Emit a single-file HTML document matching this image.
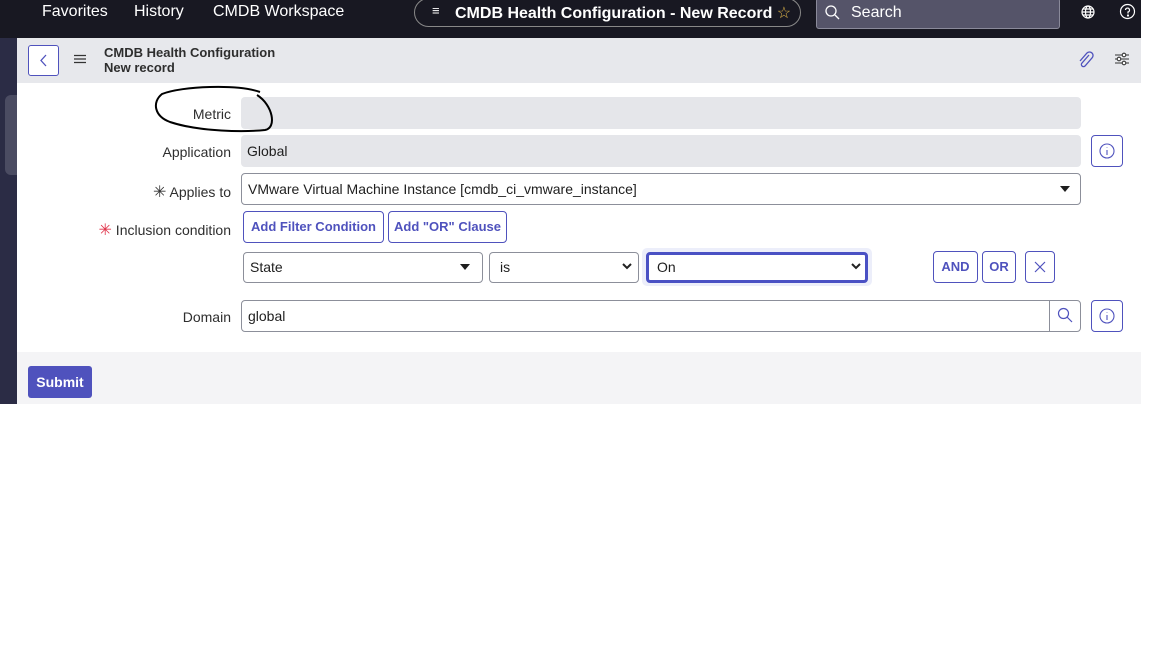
<!DOCTYPE html>
<html><head><style>
*{box-sizing:border-box;margin:0;padding:0}
body{width:1152px;height:648px;background:#fff;font-family:"Liberation Sans",sans-serif;position:relative;overflow:hidden;color:#1e1e1e}
.abs{position:absolute}
.top{left:0;top:0;width:1141px;height:38px;background:#181822}
.nav{color:#fff;font-size:16px;top:3px}
.side{left:0;top:38px;width:17px;height:366px;background:#2b2c45}
.hdr{left:17px;top:38px;width:1124px;height:45px;background:#e7e8ec}
.form{left:17px;top:83px;width:1124px;height:269px;background:#fff}
.foot{left:17px;top:352px;width:1124px;height:52px;background:#f4f4f6}
.lbl{font-size:14px;color:#2e2e2e;text-align:right;width:214px;left:17px}
.ro{background:#e5e6ea;border-radius:4px}
.inp{border:1px solid #8c8f9a;border-radius:4px;background:#fff;font-size:14px;padding-left:6px;line-height:30px}
.btn{border:1px solid #4f52bd;border-radius:4px;color:#4f52bd;font-weight:bold;font-size:13px;text-align:center;background:#fff}
.caret{width:0;height:0;border-left:5px solid transparent;border-right:5px solid transparent;border-top:6px solid #1e1e1e}
</style></head><body>
<div class="abs top"></div>
<div class="abs nav" style="left:42px">Favorites</div>
<div class="abs nav" style="left:134px">History</div>
<div class="abs nav" style="left:213px">CMDB Workspace</div>
<div class="abs" style="left:414px;top:-2px;width:387px;height:29px;border:1px solid #888;border-radius:15px"></div>
<div class="abs nav" style="left:432px;top:3px;font-size:13px">&#8801;</div>
<div class="abs nav" style="left:455px;font-weight:bold">CMDB Health Configuration - New Record <span style="color:#e2b84a;font-weight:normal">☆</span></div>
<div class="abs" style="left:816px;top:-2px;width:244px;height:31px;background:#555469;border:1px solid #8a8a9a;border-radius:3px"></div>
<svg class="abs" style="left:824px;top:4px" width="16" height="16"><circle cx="7" cy="7" r="5" fill="none" stroke="#fff" stroke-width="1.3"/><path d="M11 11l4 4" stroke="#fff" stroke-width="1.3"/></svg>
<div class="abs nav" style="left:851px;top:4px">Search</div>
<svg class="abs" style="left:1080px;top:4px" width="16" height="16" fill="none" stroke="#fff" stroke-width="1.2"><circle cx="8" cy="8" r="6"/><ellipse cx="8" cy="8" rx="2.5" ry="6"/><path d="M2 8h12M3 5h10M3 11h10"/></svg>
<svg class="abs" style="left:1119px;top:3px" width="17" height="17" fill="none" stroke="#fff" stroke-width="1.2"><circle cx="8.5" cy="8.5" r="7"/><path d="M6.5 7a2 2 0 1 1 2.5 2v1.5"/><circle cx="9" cy="12.5" r=".5" fill="#fff"/></svg>
<div class="abs side"></div>
<div class="abs" style="left:5px;top:95px;width:12px;height:80px;background:#4b4c62;border-radius:6px 0 0 6px"></div>
<div class="abs hdr"></div>
<div class="abs" style="left:28px;top:45px;width:31px;height:31px;border:1px solid #4f52bd;border-radius:3px;background:#fff"></div>
<svg class="abs" style="left:38px;top:53px" width="12" height="15"><path d="M8 2L3 7.5 8 13" fill="none" stroke="#4f52bd" stroke-width="1.3"/></svg>
<svg class="abs" style="left:74px;top:54px" width="12" height="10" stroke="#333" stroke-width="1.2"><path d="M0 1.5h12M0 5h12M0 8.5h12"/></svg>
<div class="abs" style="left:104px;top:45px;font-size:13px;font-weight:bold;color:#2e2e2e;line-height:15px">CMDB Health Configuration<br>New record</div>
<svg class="abs" style="left:1077px;top:51px" width="18" height="18" fill="none" stroke="#4f52bd" stroke-width="1.3"><path d="M12 4l-7 8a2 2 0 0 0 3 3l7-8a3.5 3.5 0 0 0-5-5l-7 8"/></svg>
<svg class="abs" style="left:1114px;top:52px" width="16" height="14" stroke="#333" stroke-width="1.1" fill="#fff"><path d="M1 3h14M1 7h14M1 11h14"/><circle cx="10" cy="3" r="1.8"/><circle cx="5" cy="7" r="1.8"/><circle cx="10" cy="11" r="1.8"/></svg>
<div class="abs form"></div>
<div class="abs foot"></div>

<div class="abs lbl" style="top:106px">Metric</div>
<div class="abs ro" style="left:241px;top:97px;width:840px;height:32px"></div>
<svg class="abs" style="left:152px;top:84px" width="125" height="50"><path d="M108 8C85 0 30 2 10 10 0 18 2 32 18 38c30 10 75 10 95 8 12-2 8-25-8-35" fill="none" stroke="#000" stroke-width="2"/></svg>

<div class="abs lbl" style="top:144px">Application</div>
<div class="abs ro" style="left:241px;top:135px;width:840px;height:32px;font-size:14px;padding-left:6px;line-height:32px">Global</div>
<div class="abs btn" style="left:1091px;top:135px;width:32px;height:32px"></div>
<svg class="abs" style="left:1098px;top:142px" width="18" height="18" fill="none" stroke="#4f52bd" stroke-width="1.1"><circle cx="9" cy="9" r="7"/><path d="M9 8v5M9 5.5v.5"/></svg>

<div class="abs lbl" style="top:182px"><span style="color:#333;font-size:16px">✳</span> Applies to</div>
<div class="abs inp" style="left:241px;top:173px;width:840px;height:32px">VMware Virtual Machine Instance [cmdb_ci_vmware_instance]</div>
<div class="abs caret" style="left:1060px;top:186px"></div>

<div class="abs lbl" style="top:220px"><span style="color:#e0334a;font-size:16px">✳</span> Inclusion condition</div>
<div class="abs btn" style="left:243px;top:211px;width:141px;height:32px;line-height:30px">Add Filter Condition</div>
<div class="abs btn" style="left:388px;top:211px;width:119px;height:32px;line-height:30px">Add "OR" Clause</div>

<div class="abs inp" style="left:243px;top:252px;width:240px;height:31px;line-height:29px">State</div>
<div class="abs caret" style="left:460px;top:264px"></div>
<div class="abs inp" style="left:489px;top:252px;width:150px;height:31px;line-height:29px;padding-left:10px">is</div>
<svg class="abs" style="left:622px;top:263px" width="10" height="8"><path d="M1 1l4 4 4-4" fill="none" stroke="#222" stroke-width="2"/></svg>
<div class="abs" style="left:642px;top:248px;width:230px;height:38px;background:#eceefa;border-radius:5px"></div>
<div class="abs inp" style="left:646px;top:252px;width:222px;height:31px;border:3px solid #4a51c4;line-height:25px;padding-left:8px">On</div>
<svg class="abs" style="left:851px;top:263px" width="10" height="8"><path d="M1 1l4 4 4-4" fill="none" stroke="#222" stroke-width="2"/></svg>
<div class="abs btn" style="left:933px;top:251px;width:45px;height:32px;line-height:30px">AND</div>
<div class="abs btn" style="left:982px;top:251px;width:34px;height:32px;line-height:30px">OR</div>
<div class="abs btn" style="left:1025px;top:251px;width:30px;height:32px"></div>
<svg class="abs" style="left:1034px;top:261px" width="12" height="12" stroke="#4f52bd" stroke-width="1.2"><path d="M1 1l10 10M11 1L1 11"/></svg>

<div class="abs lbl" style="top:309px">Domain</div>
<div class="abs inp" style="left:241px;top:300px;width:840px;height:32px">global</div>
<div class="abs" style="left:1049px;top:301px;width:1px;height:30px;background:#8c8f9a"></div>
<svg class="abs" style="left:1057px;top:307px" width="16" height="16" fill="none" stroke="#4f52bd" stroke-width="1.2"><circle cx="6.5" cy="6.5" r="5"/><path d="M10 10l5 5"/></svg>
<div class="abs btn" style="left:1091px;top:300px;width:32px;height:32px"></div>
<svg class="abs" style="left:1098px;top:307px" width="18" height="18" fill="none" stroke="#4f52bd" stroke-width="1.1"><circle cx="9" cy="9" r="7"/><path d="M9 8v5M9 5.5v.5"/></svg>

<div class="abs" style="left:28px;top:366px;width:64px;height:32px;background:#4f52bd;border-radius:3px;color:#fff;font-weight:bold;font-size:14px;text-align:center;line-height:32px">Submit</div>
</body></html>
